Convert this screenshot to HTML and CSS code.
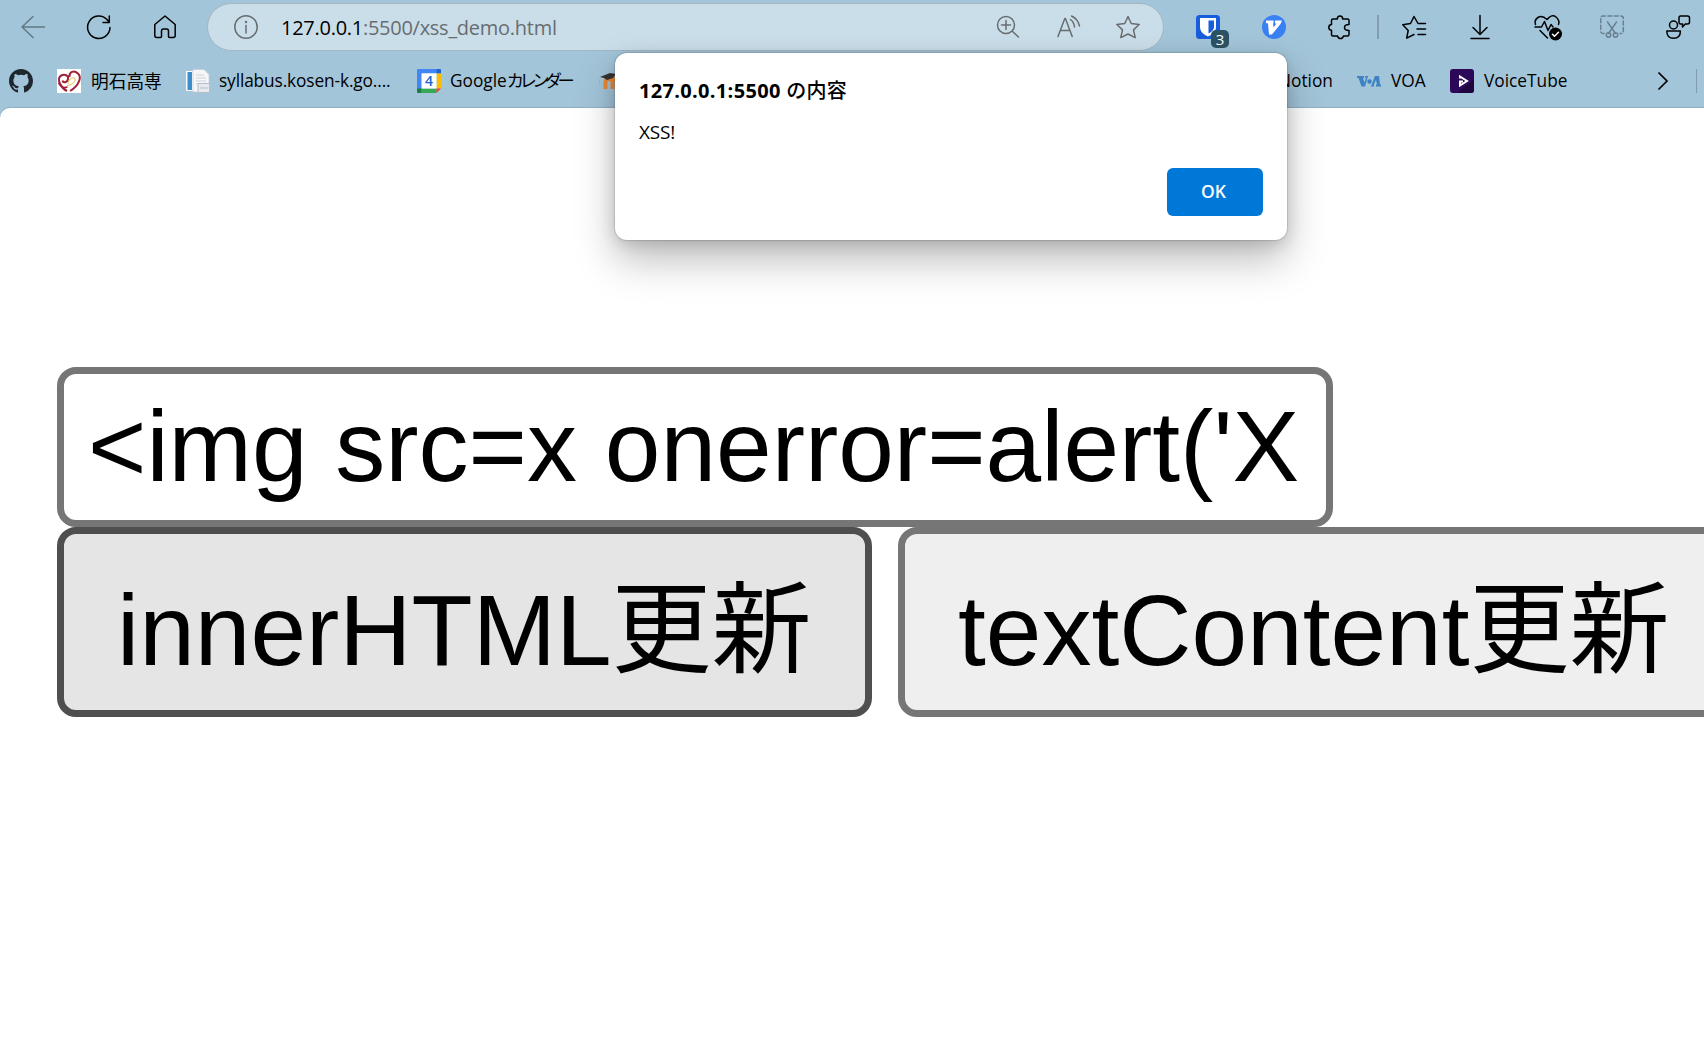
FILE: index.html
```html
<!DOCTYPE html>
<html lang="ja">
<head>
<meta charset="utf-8">
<title>xss_demo</title>
<link rel="stylesheet" href="styles.css">
</head>
<body>
<header class="chrome">
  <div class="toolbar">
    <svg class="ico dim" viewBox="0 0 24 24"><path d="M23.500 12H1M12 1.500L1 12l11 10.500"/></svg>
    <svg class="ico" viewBox="0 0 24 24"><path d="M23 12.500A11.200 11.200 0 1 1 20 4.600L22 7M22.300 1v6.500H16"/></svg>
    <svg class="ico" viewBox="0 0 24 24"><path d="M1.800 9.500L12 1l10.200 8.500V20.500q0 2-2 2H16.500q-1 0-1-1V16q0-2-2-2h-3q-2 0-2 2v5.500q0 1-1 1H3.800q-2 0-2-2z"/></svg>
    <div class="address">
      <svg class="ico gray" viewBox="0 0 24 24"><circle cx="12" cy="12" r="11.200"/><path d="M12 10.500V18"/><circle cx="12" cy="7" r=".5"/></svg>
      <span class="url"><b class="host">127.0.0.1</b>:5500/xss_demo.html</span>
      <svg class="ico gray" viewBox="0 0 24 24"><circle cx="10" cy="10" r="8.500"/><path d="M16.500 16.500L22.500 22M10 5.500v9M5.500 10h9"/></svg>
      <svg class="ico gray" viewBox="0 0 24 24"><path d="M2 21.500L8.800 3.500h.6L16.200 21.500M4.500 15.500h9.400M14.500 4.500q3.500 2.500 4 7.500M15.500 1Q22 4 23.500 11"/></svg>
      <svg class="ico gray" viewBox="0 0 24 24"><path d="M12 1.500l3.200 7 8 1-5.700 5.400 1.700 7.800L12 19l-7.200 3.700 1.700-7.800L.8 9.500l8-1z"/></svg>
    </div>
    <div class="extensions">
      <span class="ext">
        <svg class="ico fill" viewBox="0 0 24 24"><rect width="24" height="24" rx="3.500" fill="#175ddc"/><path fill="#fff" d="M4 3h16v9c0 5-4 7.500-8 9.500C8 19.500 4 17 4 12z"/><path fill="#175ddc" d="M12.500 5.500H18V12c0 3-2.500 5-5.500 6.500z"/></svg>
        <span class="badge">3</span>
      </span>
      <svg class="ico fill" viewBox="0 0 24 24"><circle cx="12" cy="12" r="12" fill="#3980f2"/><path fill="#fff" d="M4 5.500h7.500v3H11l.5 4 3-4h-1.500v-3h7L18.500 9 10 19.500H7L6 8.500 4 8z"/></svg>
      <svg class="ico puzzle" viewBox="0 0 24 24"><path d="M3.500 5.500q0-1.500 1.500-1.500h4.300q0-3 2.700-3t2.700 3H19.500q1.500 0 1.500 1.500V9.500q-4.500 0-4.500 3t4.500 3V19.500q0 1.500-1.500 1.500h-4q-.6 2.500-3 2.500t-3-2.500H5q-1.500 0-1.500-1.500v-4.300Q.8 15.200.8 12.500t2.700-3z"/></svg>
      <i class="divider"></i>
      <svg class="ico" viewBox="0 0 24 24"><path d="M23.500 8.500H16L12 1.500 8.500 8.500.8 9.800l5.400 5.700-1.500 7.700L12 19.500M15 14h8.500M16 19.500h7.500"/></svg>
      <svg class="ico" viewBox="0 0 24 24"><path d="M12 .5V19.500M5 12.500l7 7 7-7M3 23.500h18"/></svg>
      <svg class="ico wide" viewBox="0 0 28 28"><path d="M1.500 10.500Q0 6 4 3.500T13 5.500Q18-.5 22 3T24.500 10.500M1 13h6.500l3-5.500 3.500 9 3-6 2 2.500M6 16.500l7.500 7.500"/><circle cx="21.500" cy="20" r="6.500" fill="#000" stroke="none"/><path stroke="#fff" d="M18.500 20.200l2 2 4-4"/></svg>
      <svg class="ico muted" viewBox="0 0 24 24"><path stroke-dasharray="4 2.500" d="M4 18.500H3q-2.300 0-2.300-2.300V3.500Q.7 1 3 1h18q2.300 0 2.300 2.500v12.700q0 2.300-2.300 2.300h-1"/><path d="M7.500 7l8 11.500M16.500 7l-8 11.500"/><circle cx="8.500" cy="20" r="2.200"/><circle cx="15.500" cy="20" r="2.200"/></svg>
      <svg class="ico" viewBox="0 0 24 24"><circle cx="7.500" cy="10" r="4"/><path d="M.8 16h13.600q0 7.300-6.800 7.300T.8 16zM14.500 1h7q2 0 2 2v4q0 2-2 2h-2.300L16.500 12V9h-2q-1.500 0-1.500-2V3q0-2 1.500-2z"/></svg>
    </div>
  </div>
  <nav class="bookmarks">
    <svg class="mark" viewBox="0 0 16 16"><path fill="#1f272e" d="M8 0C3.580 0 0 3.580 0 8c0 3.540 2.290 6.530 5.470 7.590.4.070.55-.17.55-.38v-1.490c-2.230.48-2.700-.95-2.700-.95-.36-.92-.89-1.170-.89-1.170-.73-.5.050-.49.050-.49.810.060 1.230.83 1.230.83.720 1.230 1.880.88 2.340.67.070-.52.280-.88.510-1.080-1.780-.2-3.640-.89-3.640-3.950 0-.87.310-1.590.82-2.150-.08-.2-.36-1.020.08-2.120 0 0 .67-.21 2.200.82a7.700 7.700 0 0 1 4 0c1.530-1.040 2.200-.82 2.200-.82.440 1.100.16 1.920.08 2.120.51.560.82 1.270.82 2.150 0 3.070-1.870 3.750-3.650 3.950.29.250.54.730.54 1.480v2.200c0 .21.150.46.550.38A8 8 0 0 0 16 8c0-4.420-3.580-8-8-8z"/></svg>
    <a class="bm">
      <svg class="mark" viewBox="0 0 24 24"><rect width="24" height="24" fill="#fff"/><g fill="none" stroke="#a02038" stroke-width="2"><path d="M10 22C4 19 0 11 3 7.500S12 6 11 10 6 14 5.500 11.500M13 22C22 17 25 8 21 4.500S12 2.500 12.500 8"/><path stroke-width="1.500" d="M1.500 14q3 6 9 4"/></g><path fill="none" stroke="#e0b34a" d="M11 15c0-5 6-8 7-5s-4 6-8 7"/></svg>
      <span class="label l1">明石高専</span>
    </a>
    <a class="bm">
      <svg class="mark" viewBox="0 0 24 24"><path fill="#fafafa" d="M0 2h8V22H0z"/><path fill="#3b8fca" d="M1.500 3H6v18H1.500z"/><path fill="#f5f6f8" stroke="#c8ccd2" stroke-width=".7" d="M7 .5h11l5 5V23H7z"/><path stroke="#ccd3da" d="M10 6h8M10 9h10M10 12h10M10 15h3"/><path fill="#e6eaf0" stroke="#b5bec8" d="M12 14.500h11.500v9H12zM14 19h8"/></svg>
      <span class="label l2">syllabus.kosen-k.go....</span>
    </a>
    <a class="bm">
      <svg class="mark" viewBox="0 0 24 24"><path fill="#4285f4" d="M0 1q0-1 1-1h19v4H5v16H0z"/><path fill="#1967d2" d="M19.500 0H23q1 0 1 1v3.500h-4.500z"/><path fill="#fbbc04" d="M19.500 4.500H24v15h-4.500z"/><path fill="#34a853" d="M4.500 19.500h15V24h-15z"/><path fill="#188038" d="M0 19.500h4.500V24H1q-1 0-1-1z"/><path fill="#ea4335" d="M19.500 19.500H24L19.500 24z"/><path fill="#fff" d="M4.500 4.500h15v15h-15z"/><text x="12" y="17" text-anchor="middle" class="day">4</text></svg>
      <span class="label l3">Google<span class="kana">カレンダー</span></span>
    </a>
    <a class="bm moodle">
      <svg class="mark" viewBox="0 0 24 24"><path fill="none" stroke="#e98936" stroke-width="4" d="M7.500 20v-7q0-3 3.500-3t3.500 3v7M14.500 13q0-3 3.500-3t3.500 3v7"/><path fill="#333" d="M2 8L12 4l6 1-3 4-6 2-3-2z"/><path stroke="#e9a067" d="M1.500 10v6"/></svg>
    </a>
    <a class="bm notion"><span class="label l4">Notion</span></a>
    <a class="bm">
      <svg class="mark" viewBox="0 0 24 24"><path fill="#3d82c4" d="M0 7h7v2H6l1.500 4.500L9 9 8 8V7h3L8 17.500H4.500L1.500 9H0zM18 7h4l1 8.500h1v2h-5v-2h1L19 11l-2 4v2.500h-3z"/><circle cx="12.500" cy="12.500" r="2.200" fill="#3d82c4"/></svg>
      <span class="label l5">VOA</span>
    </a>
    <a class="bm">
      <svg class="mark" viewBox="0 0 24 24"><rect width="24" height="24" rx="3" fill="#2d0859"/><path fill="#1f043d" d="M24 10v11q0 3-3 3H8z"/><path fill="none" stroke="#fff" stroke-width="2" d="M10 9.500V7.500l7 4.500-7 4.500V12.500h3"/></svg>
      <span class="label l6">VoiceTube</span>
    </a>
    <svg class="more" viewBox="0 0 12 20"><path d="M1.500 1.500L10 10l-8.500 8.500"/></svg>
    <i class="divider"></i>
  </nav>
</header>
<main class="page">
  <div class="field"><span class="value">&lt;img src=x onerror=alert('X</span></div>
  <div class="actions">
    <button class="btn active"><span>innerHTML更新</span></button>
    <button class="btn second"><span>textContent更新</span></button>
  </div>
</main>
<section class="dialog">
  <h1 class="title">127.0.0.1:5500 <span class="jp">の内容</span></h1>
  <p class="message">XSS!</p>
  <button class="ok">OK</button>
</section>
</body>
</html>
```
FILE: styles.css
```css
* { box-sizing: border-box; }
body {
  margin: 0;
  width: 1704px;
  height: 1051px;
  overflow: hidden;
  position: relative;
  background: #a3c5d9;
  color: #000;
  font-family: "Open Sans", "Noto Sans CJK JP", sans-serif;
}
.chrome { height: 108px; }
.toolbar { height: 54px; display: flex; align-items: center; padding-left: 21px; }
.ico { width: 24px; height: 24px; flex: none; margin-right: 42px; fill: none; stroke: #000; stroke-width: 1.5; stroke-linejoin: round; stroke-linecap: round; overflow: visible; }
.ico.dim { stroke: #607984; }
.ico.muted { stroke: #688190; }
.ico.gray { stroke: #686d70; }
.ico.fill { stroke: none; }
.address {
  width: 957px; height: 48px; margin-left: -12px; flex: none;
  border: 1px solid #a4b6c2; border-radius: 24px; background: #cadee9;
  display: flex; align-items: center; padding-left: 26px;
}
.address .ico { margin-right: 36px; }
.address .ico:first-child { margin-right: 23px; }
.url { width: 715px; flex: none; font-size: 20px; line-height: 28px; padding-top: 1px; color: #686d70; white-space: nowrap; letter-spacing: -.27px; }
.host { font-weight: 400; color: #000; }
.extensions { display: flex; align-items: center; margin-left: 32px; }
.ext { position: relative; display: flex; }
.badge {
  position: absolute; left: 15px; top: 15px; width: 18px; height: 18px;
  border-radius: 5px; background: #2c5364; color: #fff; font-size: 15px; line-height: 18px; text-align: center;
}
.ico.puzzle { margin-right: 43px; }
.ico.wide { width: 28px; height: 28px; margin: 2px 38px 0 0; }
.extensions .divider { margin: 0 23px 0 -18px; }
.divider { width: 2px; height: 24px; flex: none; background: #819daf; }
.bookmarks { height: 54px; display: flex; align-items: center; padding-left: 9px; }
.mark { width: 24px; height: 24px; flex: none; }
.bm { display: flex; align-items: center; gap: 9px; margin-left: 24px; flex: none; }
.label { font-size: 17.300px; line-height: 24px; white-space: nowrap; flex: none; }
.l1 { width: 72px; padding-left: 1px; font-size: 17.700px; }
.l2 { width: 174px; letter-spacing: -.12px; }
.l3 { width: 124px; }
.l4 { width: 55px; }
.l5 { width: 36px; padding-left: 1px; }
.l6 { width: 174px; padding-left: 1px; }
.kana { letter-spacing: -4.600px; }
.day { font: 600 14px "Open Sans", sans-serif; fill: #1967d2; }
.moodle { width: 656px; }
.more { width: 12px; height: 20px; flex: none; fill: none; stroke: #000; stroke-width: 1.700; }
.bookmarks .divider { width: 1px; margin-left: 27px; }
.page {
  height: 943px; background: #fff; border-top-left-radius: 10px;
  box-shadow: 0 -1px 1px #8fb0c4; padding: 259px 0 0 57px;
  font-family: "Liberation Sans", "Noto Sans CJK JP", sans-serif;
}
.field {
  width: 1276px; height: 160px; border: 7px solid #767676; border-radius: 19px;
  padding: 0 23px 2px 24px; display: flex; align-items: center;
}
.value { flex: 1; white-space: nowrap; font-size: 100px; line-height: 115px; }
.actions { display: flex; gap: 26px; }
.btn {
  width: 815px; height: 190px; flex: none; border: 7px solid #767676; border-radius: 19px;
  padding: 17px 0 0 53px; background: #efefef; color: #000; font: inherit; font-size: 100px;
  line-height: 115px; text-align: left; white-space: nowrap;
}
.btn.active { background: #e5e5e5; border-color: #4f4f4f; }
.btn.second { width: 860px; }
.dialog {
  position: absolute; left: 615px; top: 53px; width: 672px; height: 187px;
  background: #fff; border-radius: 12px; padding: 24px;
  box-shadow: 0 0 1px 1px rgba(0,0,0,.12), 0 20px 40px rgba(0,0,0,.26), 0 4px 16px rgba(0,0,0,.14);
  display: flex; flex-direction: column;
}
.title { margin: 0; font-size: 20px; line-height: 28px; font-weight: 700; white-space: nowrap; letter-spacing: .32px; }
.jp { font-weight: 500; }
.message { margin: 15px 0 0; font-size: 19px; line-height: 24px; letter-spacing: -.2px; }
.ok {
  margin: auto 0 0 auto; width: 96px; height: 48px; border: 0; border-radius: 6px;
  background: #0078d7; color: #fff; font: 600 17.500px "Open Sans", sans-serif; padding: 0 3px 2px 0;
}
```
